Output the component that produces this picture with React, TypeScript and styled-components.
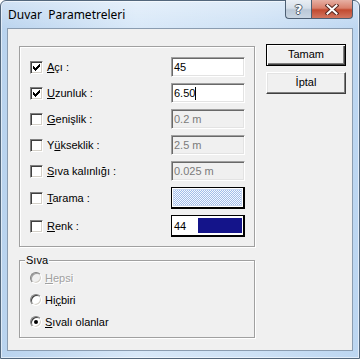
import React from 'react';
import styled, { createGlobalStyle, css } from 'styled-components';

const Global = createGlobalStyle`
  html, body { margin: 0; padding: 0; background: #ffffff; }
  body { width: 360px; height: 359px; overflow: hidden; font-family: "Liberation Sans", Arial, sans-serif; }
  * { box-sizing: border-box; }
`;

const Window = styled.div`
  width: 360px;
  height: 359px;
  display: flex;
  flex-direction: column;
  padding: 0 6px 7px 6px;
  border: 1px solid #53677c;
  border-radius: 6px 6px 0 0;
  background:
    linear-gradient(to bottom, rgba(255,255,255,0.35), rgba(255,255,255,0) 30px),
    linear-gradient(to right, #b9d3ee 0%, #d8e8f8 38%, #cde1f5 70%, #bcd6f1 100%);
  box-shadow: inset 0 0 0 1px rgba(255, 255, 255, 0.55);
`;

const TitleBar = styled.div`
  height: 27px;
  display: flex;
  align-items: flex-start;
`;

const Title = styled.span`
  margin: 6px 0 0 1px;
  font-family: "Noto Sans", "Open Sans", sans-serif;
  font-size: 12px;
  line-height: 16px;
  color: #000;
  white-space: pre;
`;

const CaptionButtons = styled.div`
  margin: -1px 0 0 auto;
  display: flex;
`;

const CaptionButton = styled.div<{ $kind: 'help' | 'close' }>`
  height: 19px;
  display: flex;
  align-items: center;
  justify-content: center;
  border: 1px solid #4d5f73;
  border-top: none;
  ${(p) =>
    p.$kind === 'help'
      ? css`
          width: 26px;
          border-right: none;
          border-radius: 0 0 0 4px;
          background: linear-gradient(to bottom, #e9eef4 0%, #d6dfe9 45%, #bac8d7 55%, #c9d6e3 100%);
        `
      : css`
          width: 42px;
          border-radius: 0 0 4px 0;
          background: linear-gradient(to bottom, #e6b0a4 0%, #d9806c 45%, #c24a30 55%, #d27660 100%);
        `}
`;

const HelpGlyph = styled.span`
  font-family: "DejaVu Sans", sans-serif;
  font-weight: bold;
  font-size: 13px;
  line-height: 13px;
  color: #fff;
  text-shadow: 1px 0 0 #4f5c6b, -1px 0 0 #4f5c6b, 0 1px 0 #4f5c6b, 0 -1px 0 #4f5c6b;
`;

const Client = styled.div`
  flex: 1;
  display: flex;
  gap: 11px;
  padding: 16px 0 0 11px;
  background: #f0f0f0;
  border: 1px solid #8a9cb0;
  font-family: "Liberation Sans", Arial, sans-serif;
  font-size: 11px;
  color: #000;
`;

const LeftColumn = styled.div`
  width: 236px;
  display: flex;
  flex-direction: column;
  gap: 13px;
`;

const GroupBox = styled.div<{ $height: number }>`
  position: relative;
  height: ${(p) => p.$height}px;
  border: 1px solid #a0a0a0;
  box-shadow: inset 1px 1px 0 #fff, 1px 1px 0 #fff;
`;

const MainGroup = styled(GroupBox)`
  margin-top: 1px;
  padding: 10px 9px 0 10px;
  display: flex;
  flex-direction: column;
  gap: 6px;
`;

const Row = styled.div<{ $tall?: boolean }>`
  height: ${(p) => (p.$tall ? 22 : 20)}px;
  display: flex;
  align-items: center;
`;

const CheckBox = styled.span`
  width: 13px;
  height: 13px;
  flex: none;
  display: block;
  background: #fff;
  border-top: 1px solid #808080;
  border-left: 1px solid #808080;
  border-bottom: 1px solid #ffffff;
  border-right: 1px solid #ffffff;
  box-shadow: inset 1px 1px 0 #404040, inset -1px -1px 0 #d4d0c8;
  position: relative;
  svg { position: absolute; left: -1px; top: -1px; }
`;

const Label = styled.span<{ $disabled?: boolean }>`
  flex: 1;
  margin-left: 4px;
  white-space: pre;
  line-height: 13px;
  color: ${(p) => (p.$disabled ? '#a0a0a0' : '#000')};
  ${(p) => p.$disabled && css`text-shadow: 1px 1px 0 #fff;`}
`;

const Key = styled.span`
  text-decoration: underline;
  text-underline-offset: 1px;
`;

const TextBox = styled.div<{ $disabled?: boolean }>`
  width: 74px;
  height: 20px;
  flex: none;
  display: flex;
  align-items: center;
  padding-left: 2px;
  background: ${(p) => (p.$disabled ? '#f0f0f0' : '#ffffff')};
  color: ${(p) => (p.$disabled ? '#7b7b7b' : '#000')};
  border-top: 1px solid #a0a0a0;
  border-left: 1px solid #a0a0a0;
  border-bottom: 1px solid #ffffff;
  border-right: 1px solid #ffffff;
  box-shadow: inset 1px 1px 0 #696969, inset -1px -1px 0 #e3e3e3;
  font-size: 11px;
  line-height: 13px;
  white-space: pre;
`;

const Caret = styled.span`
  display: inline-block;
  width: 1px;
  height: 13px;
  background: #000;
`;

const Swatch = styled.div`
  width: 74px;
  height: 22px;
  flex: none;
  margin-left: 1px;
  display: flex;
  padding: 1px;
  background: #fff;
  border: 1px solid #000;
  border-right-width: 2px;
  border-bottom-width: 2px;
`;

const Pattern = styled.div`
  flex: 1;
  background: repeating-conic-gradient(#a3bde9 0 25%, #f4f8ff 0 50%) 0 0 / 2px 2px;
  border: 1px solid #c9d8f2;
`;

const ColorValue = styled.span`
  width: 25px;
  padding-left: 1px;
  display: flex;
  align-items: center;
  font-size: 11px;
`;

const ColorBlock = styled.div`
  flex: 1;
  margin: 1px 0 1px 0;
  background: #14148a;
`;

const Legend = styled.span`
  position: absolute;
  top: -7px;
  left: 5px;
  padding: 0 1px;
  background: #f0f0f0;
  line-height: 13px;
`;

const RadioGroup = styled(GroupBox)`
  padding: 9px 0 0 10px;
  display: flex;
  flex-direction: column;
  gap: 6px;
`;

const RadioRow = styled.div`
  height: 16px;
  display: flex;
  align-items: center;
`;

const Radio = styled.span<{ $disabled?: boolean; $checked?: boolean }>`
  width: 12px;
  height: 12px;
  flex: none;
  border-radius: 50%;
  display: flex;
  align-items: center;
  justify-content: center;
  background: ${(p) => (p.$disabled ? '#f0f0f0' : '#ffffff')};
  border: 1px solid;
  border-color: #808080 #ffffff #ffffff #808080;
  box-shadow: inset 1px 1px 0 ${(p) => (p.$disabled ? '#a0a0a0' : '#404040')}, inset -1px -1px 0 #d4d0c8;
  &::after {
    content: '';
    display: ${(p) => (p.$checked ? 'block' : 'none')};
    width: 4px;
    height: 4px;
    border-radius: 50%;
    background: #000;
  }
`;

const RadioLabel = styled(Label)`
  margin-left: 3px;
`;

const ButtonColumn = styled.div`
  display: flex;
  flex-direction: column;
  gap: 6px;
  margin-top: -1px;
`;

const PushButton = styled.button<{ $default?: boolean }>`
  width: 80px;
  height: 22px;
  padding: 0 0 2px 0;
  margin: 0;
  font-family: "Liberation Sans", Arial, sans-serif;
  font-size: 11px;
  color: #000;
  background: #f0f0f0;
  ${(p) =>
    p.$default
      ? css`
          border: 1px solid #000;
          box-shadow: inset 1px 1px 0 #fff, inset -1px -1px 0 #404040, inset -2px -2px 0 #808080;
        `
      : css`
          border: 1px solid;
          border-color: #fff #404040 #404040 #fff;
          box-shadow: inset -1px -1px 0 #808080, inset 1px 1px 0 #e3e3e3;
        `}
`;

const Check = () => (
  <svg width="13" height="13" viewBox="0 0 13 13">
    <path
      d="M3 5h1v3h-1z M4 6h1v3h-1z M5 7h1v3h-1z M6 6h1v3h-1z M7 5h1v3h-1z M8 4h1v3h-1z M9 3h1v3h-1z"
      fill="#000"
    />
  </svg>
);

const CloseGlyph = () => (
  <svg width="14" height="11" viewBox="0 0 14 11">
    <path d="M2.5 1.5 L11.5 9.5 M11.5 1.5 L2.5 9.5" stroke="#5a2a22" strokeWidth="4" strokeLinecap="square" />
    <path d="M2.5 1.5 L11.5 9.5 M11.5 1.5 L2.5 9.5" stroke="#ffffff" strokeWidth="2" strokeLinecap="square" />
  </svg>
);

type FieldRow = {
  checked: boolean;
  label: React.ReactNode;
  value: string;
  disabled: boolean;
  caret?: boolean;
};

const rows: FieldRow[] = [
  { checked: true, label: <><Key>A</Key>çı :</>, value: '45', disabled: false },
  { checked: true, label: <><Key>U</Key>zunluk :</>, value: '6.50', disabled: false, caret: true },
  { checked: false, label: <><Key>G</Key>enişlik :</>, value: '0.2 m', disabled: true },
  { checked: false, label: <>Y<Key>ü</Key>kseklik :</>, value: '2.5 m', disabled: true },
  { checked: false, label: <><Key>S</Key>ıva kalınlığı :</>, value: '0.025 m', disabled: true },
];

export default function App() {
  return (
    <>
      <Global />
      <Window>
        <TitleBar>
          <Title>Duvar  Parametreleri</Title>
          <CaptionButtons>
            <CaptionButton $kind="help">
              <HelpGlyph>?</HelpGlyph>
            </CaptionButton>
            <CaptionButton $kind="close">
              <CloseGlyph />
            </CaptionButton>
          </CaptionButtons>
        </TitleBar>
        <Client>
          <LeftColumn>
            <MainGroup $height={201}>
              {rows.map((r, i) => (
                <Row key={i}>
                  <CheckBox>{r.checked && <Check />}</CheckBox>
                  <Label>{r.label}</Label>
                  <TextBox $disabled={r.disabled}>
                    {r.value}
                    {r.caret && <Caret />}
                  </TextBox>
                </Row>
              ))}
              <Row $tall>
                <CheckBox />
                <Label><Key>T</Key>arama :</Label>
                <Swatch>
                  <Pattern />
                </Swatch>
              </Row>
              <Row $tall>
                <CheckBox />
                <Label><Key>R</Key>enk :</Label>
                <Swatch>
                  <ColorValue>44</ColorValue>
                  <ColorBlock />
                </Swatch>
              </Row>
            </MainGroup>
            <RadioGroup $height={78}>
              <Legend>Sıva</Legend>
              <RadioRow>
                <Radio $disabled />
                <RadioLabel $disabled><Key>H</Key>epsi</RadioLabel>
              </RadioRow>
              <RadioRow>
                <Radio />
                <RadioLabel>Hi<Key>ç</Key>biri</RadioLabel>
              </RadioRow>
              <RadioRow>
                <Radio $checked />
                <RadioLabel><Key>S</Key>ıvalı olanlar</RadioLabel>
              </RadioRow>
            </RadioGroup>
          </LeftColumn>
          <ButtonColumn>
            <PushButton $default>Tamam</PushButton>
            <PushButton>İptal</PushButton>
          </ButtonColumn>
        </Client>
      </Window>
    </>
  );
}
